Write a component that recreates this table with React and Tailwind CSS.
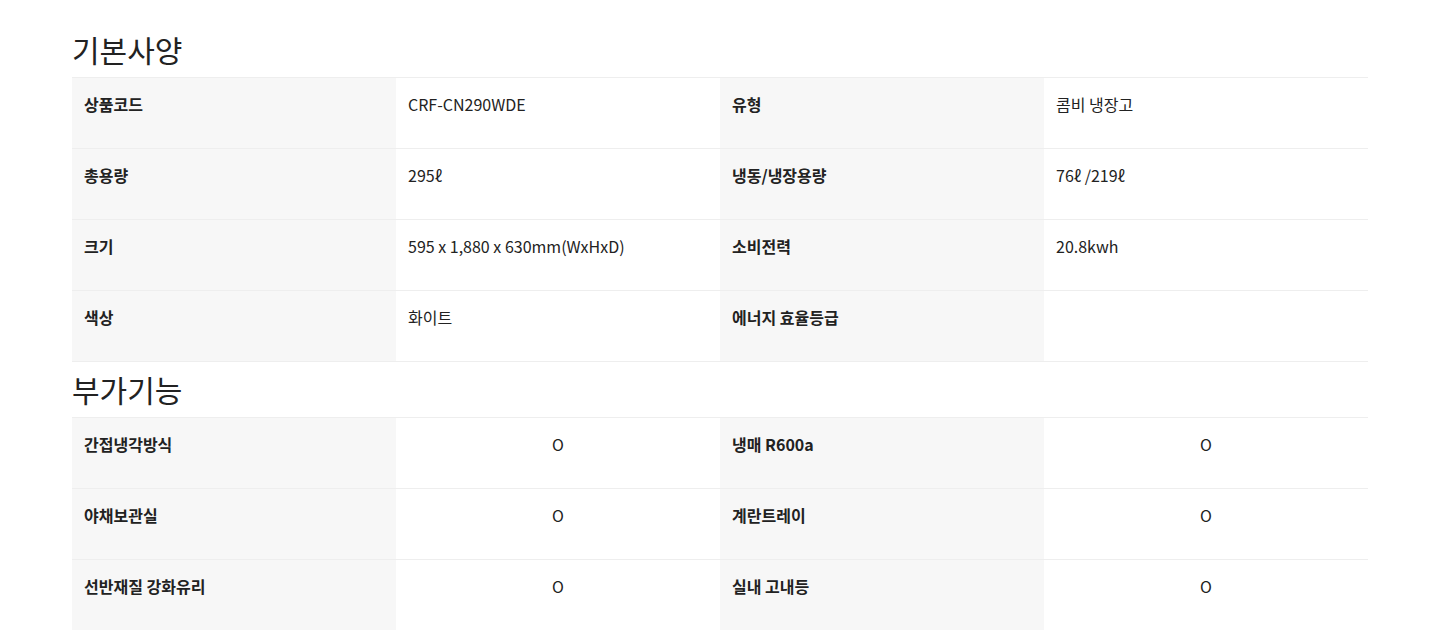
const basic = [
    ['상품코드', 'CRF-CN290WDE', '유형', '콤비 냉장고'],
    ['총용량', '295ℓ', '냉동/냉장용량', '76ℓ /219ℓ'],
    ['크기', '595 x 1,880 x 630mm(WxHxD)', '소비전력', '20.8kwh'],
    ['색상', '화이트', '에너지 효율등급', ''],
];

const extra = [
    ['간접냉각방식', 'O', '냉매 R600a', 'O'],
    ['야채보관실', 'O', '계란트레이', 'O'],
    ['선반재질 강화유리', 'O', '실내 고내등', 'O'],
];

const SpecTable = ({ rows, center }) => (
    <div className="border-b border-[#eeeeee]">
        {rows.map((row, i) => (
            <div key={i} className="grid grid-cols-4 border-t border-[#eeeeee]">
                {row.map((cell, j) => {
                    const isLabel = j % 2 === 0;
                    return (
                        <div
                            key={j}
                            className={
                                isLabel
                                    ? 'h-[70px] bg-[#f7f7f7] px-3 pt-[14px] text-[16px] leading-[24px] font-bold text-[#222222]'
                                    : center
                                    ? 'h-[70px] bg-white px-3 pt-[14px] text-[16px] leading-[24px] text-center text-[#222222]'
                                    : 'h-[70px] bg-white px-3 pt-[14px] text-[16px] leading-[24px] text-[#222222]'
                            }
                        >
                            {cell}
                        </div>
                    );
                })}
            </div>
        ))}
    </div>
);

export default function App() {
    return (
        <div
            className="w-[1440px] bg-white pt-[21px] px-[72px]"
            style={{ fontFamily: '"Noto Sans CJK KR", "Noto Sans", sans-serif' }}
        >
            {/* 기본사양 */}
            <h2 className="h-[56px] text-[30px] leading-[56px] font-normal text-[#222222]">기본사양</h2>
            <SpecTable rows={basic} />

            {/* 부가기능 */}
            <h2 className="h-[55px] text-[30px] leading-[55px] font-normal text-[#222222]">부가기능</h2>
            <SpecTable rows={extra} center />
        </div>
    );
}
